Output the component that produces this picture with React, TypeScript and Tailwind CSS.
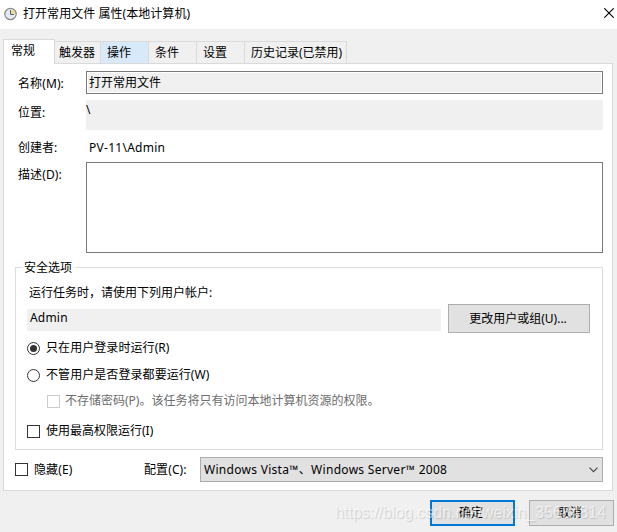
import clsx from "clsx";

type Tab = {
  label: string;
  className: string;
};

const tabs: Tab[] = [
  { label: "触发器", className: "w-[46px] pl-1" },
  { label: "操作", className: "w-12 pl-1.5 bg-[#d8eaf9]" },
  { label: "条件", className: "w-12 pl-1.5" },
  { label: "设置", className: "w-12 pl-1.5" },
  { label: "历史记录(已禁用)", className: "w-[102px] pl-1.5" },
];

const ClockIcon = () => (
  <svg width="13" height="14" viewBox="0 0 13 14" className="shrink-0">
    <circle cx="6.5" cy="7" r="5.7" fill="#e3eaf1" stroke="#8b8b8b" strokeWidth="1.3" />
    <path d="M6.5 7V2.4A4.6 4.6 0 0 1 11.1 7Z" fill="#f6d98c" />
    <path d="M6.5 3V7.5H9.8" fill="none" stroke="#4f6478" strokeWidth="1" />
  </svg>
);

const Radio = ({ checked = false }: { checked?: boolean }) => (
  <span className="flex size-[13px] shrink-0 items-center justify-center rounded-full border border-[#333] bg-white">
    {checked && <span className="size-[7px] rounded-full bg-[#333]" />}
  </span>
);

const Checkbox = ({ disabled = false }: { disabled?: boolean }) => (
  <span
    className={clsx(
      "size-[13px] shrink-0 border bg-white",
      disabled ? "border-[#ccc]" : "border-[#333]"
    )}
  />
);

const App = () => {
  return (
    <div className="relative flex h-[532px] w-[617px] flex-col overflow-hidden bg-[#f0f0f0] font-['Noto_Sans','Noto_Sans_CJK_SC',sans-serif] text-[12px] leading-4 whitespace-nowrap text-black">
      <header className="flex h-[29px] shrink-0 items-start bg-white pl-1">
        <div className="mt-[7px]">
          <ClockIcon />
        </div>
        <h1 className="mt-1.5 ml-1.5 tracking-[0.05px]">打开常用文件 属性(本地计算机)</h1>
        <svg width="10" height="10" viewBox="0 0 10 10" className="mt-2 mr-[3px] ml-auto">
          <path d="M0.3 0.3L9.7 9.7M9.7 0.3L0.3 9.7" stroke="#000" strokeWidth="1.1" />
        </svg>
      </header>

      <nav className="z-10 -mb-px flex h-[35px] shrink-0 items-end pt-2.5 pl-[3px]">
        <div className="h-[25px] w-[52px] border border-b-0 border-[#dadada] bg-white pt-[3px] pl-[7px]">
          常规
        </div>
        {tabs.map((tab) => (
          <div
            key={tab.label}
            className={clsx(
              "h-[23px] border-y border-r border-[#dadada] pt-[3px]",
              tab.className
            )}
          >
            {tab.label}
          </div>
        ))}
      </nav>

      <main className="ml-[3px] h-[428px] w-[610px] shrink-0 border border-[#dadada] bg-white pt-[7px] pl-[11px]">
        <div className="flex h-[29px]">
          <label className="w-[71px] pt-[5px] pl-[3px] tracking-[0.1px]">名称(M):</label>
          <div className="h-[23px] w-[517px] border border-[#7a7a7a] p-px">
            <div className="h-full bg-[#f0f0f0] pt-0.5 pl-px">打开常用文件</div>
          </div>
        </div>
        <div className="flex h-[38px]">
          <label className="w-[71px] pt-[5px] pl-[3px]">位置:</label>
          <div className="h-[30px] w-[517px] bg-[#f0f0f0] pt-0.5">\</div>
        </div>
        <div className="flex h-6">
          <label className="w-[71px] pt-0.5 pl-[3px]">创建者:</label>
          <span className="pt-0.5 pl-[3px] tracking-[0.27px]">PV-11\Admin</span>
        </div>
        <div className="flex h-[105px]">
          <label className="w-[71px] pt-[5px] pl-[3px] tracking-[0.1px]">描述(D):</label>
          <div className="h-[91px] w-[517px] border border-[#7a7a7a]" />
        </div>

        <section className="h-[183px] w-[588px] border border-[#dcdcdc] pl-[11px]">
          <h2 className="-mt-2 -ml-[5px] w-fit bg-white pr-[3px] pl-0.5">安全选项</h2>
          <div className="mt-[9px] pl-0.5">运行任务时，请使用下列用户帐户:</div>
          <div className="mt-[3px] flex items-start">
            <div className="mt-[5px] h-[22px] w-[414px] bg-[#f0f0f0] pt-px pl-[3px] tracking-[0.2px]">
              Admin
            </div>
            <button className="ml-[7px] h-[29px] w-[142px] border border-[#adadad] bg-[#e1e1e1] pr-0.5">
              更改用户或组(U)...
            </button>
          </div>
          <div className="mt-1.5 flex h-[18px] items-center gap-1.5">
            <Radio checked />
            <span className="tracking-[0.07px]">只在用户登录时运行(R)</span>
          </div>
          <div className="mt-[9px] flex h-[18px] items-center gap-1.5">
            <Radio />
            <span className="tracking-[0.07px]">不管用户是否登录都要运行(W)</span>
          </div>
          <div className="mt-2 flex h-[18px] items-center gap-1.5 pl-5 text-[#6d6d6d]">
            <Checkbox disabled />
            <span className="-ml-px">不存储密码(P)。该任务将只有访问本地计算机资源的权限。</span>
          </div>
          <div className="mt-3 flex h-[18px] items-center gap-1.5">
            <Checkbox />
            <span>使用最高权限运行(I)</span>
          </div>
        </section>

        <div className="mt-[7px] flex h-[25px] items-center">
          <Checkbox />
          <span className="ml-1.5 w-[110px] tracking-[0.1px]">隐藏(E)</span>
          <span className="w-14 tracking-[0.1px]">配置(C):</span>
          <div className="flex h-[25px] w-[403px] items-center justify-between border border-[#adadad] bg-[#e1e1e1] pr-1 pl-[3px]">
            <span className="tracking-[0.29px]">Windows Vista™、Windows Server™ 2008</span>
            <svg width="9" height="6" viewBox="0 0 9 6">
              <path d="M0.5 0.7L4.5 4.7L8.5 0.7" fill="none" stroke="#444" strokeWidth="1.1" />
            </svg>
          </div>
        </div>
      </main>

      <footer className="flex pt-[9px] pl-[430px]">
        <button className="h-[26px] w-[85px] border-2 border-[#0078d7] bg-[#e1e1e1] pr-[3px]">
          确定
        </button>
        <button className="ml-3.5 h-[26px] w-[85px] border border-[#adadad] bg-[#e1e1e1] pr-[3px]">
          取消
        </button>
      </footer>

      <div className="absolute top-[503px] left-[335px] font-['Liberation_Sans',sans-serif] text-[16px] leading-5 tracking-[-0.03px] text-white/60 [text-shadow:1px_1px_1px_rgba(0,0,0,0.14)]">
        https://blog.csdn.net/weixin_35684814
      </div>
    </div>
  );
};

export default App;
